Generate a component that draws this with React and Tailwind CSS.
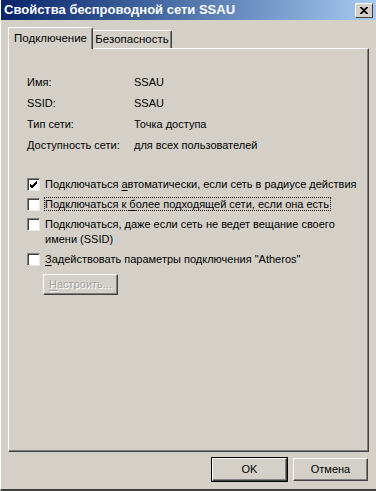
import React from 'react';

const font = { fontFamily: '"Liberation Sans", Arial, sans-serif' };

function U({ children }) {
  return <span className="underline underline-offset-2">{children}</span>;
}

function Check({ checked, children }) {
  return (
    <div className="flex items-start">
      <div className="mt-[1px] w-[13px] h-[13px] shrink-0 bg-white border border-t-[#808080] border-l-[#808080] border-r-[#e8e8e8] border-b-[#e8e8e8] shadow-[inset_1px_1px_0_#404040] flex items-center justify-center">
        {checked && (
          <svg width="9" height="9" viewBox="0 0 9 9">
            <path d="M1 4 L3 6 L8 1 M1 5 L3 7 L8 2 M1 6 L3 8 L8 3" stroke="#000" strokeWidth="1" fill="none" />
          </svg>
        )}
      </div>
      <div className="ml-[5px] leading-[15px]">{children}</div>
    </div>
  );
}

function Button({ children, className = '', disabled }) {
  return (
    <div
      className={
        'flex items-center justify-center border border-t-white border-l-white border-r-[#404040] border-b-[#404040] shadow-[inset_-1px_-1px_0_#808080] ' +
        (disabled ? 'text-[#a0a0a0] [text-shadow:1px_1px_0_#fff] ' : 'text-black ') +
        className
      }
    >
      {children}
    </div>
  );
}

export default function App() {
  return (
    <div className="w-[376px] h-[491px] bg-[#d4d0c8] text-[11px] text-black flex flex-col border-l border-l-white border-b-2 border-b-[#404040] overflow-hidden" style={font}>
      <div className="h-[20px] shrink-0 bg-gradient-to-r from-[#0a246a] to-[#a6caf0] flex items-center justify-between pl-[3px] pr-[3px]">
        <span className="text-white font-bold text-[13px]">Свойства беспроводной сети SSAU</span>
        <div className="w-[18px] h-[15px] bg-[#d4d0c8] border border-t-white border-l-white border-r-[#404040] border-b-[#404040] flex items-center justify-center">
          <svg width="8" height="7" viewBox="0 0 8 7">
            <path d="M0 0 L7 7 M1 0 L8 7 M7 0 L0 7 M8 0 L1 7" stroke="#000" strokeWidth="1.2" fill="none" />
          </svg>
        </div>
      </div>

      <div className="flex-1 flex flex-col px-[7px] pt-[7px]">
        <div className="flex items-end h-[21px] relative z-10">
          <div className="h-[22px] w-[85px] flex items-center justify-center text-[11.5px] bg-[#d4d0c8] border border-b-0 border-t-white border-l-white border-r-[#404040] rounded-t-[2px] shadow-[inset_-1px_0_0_#808080] mb-[-1px]">
            Подключение
          </div>
          <div className="h-[18px] w-[79px] flex items-center justify-center text-[11.5px] border border-b-0 border-t-white border-l-0 border-r-[#404040] rounded-tr-[2px] shadow-[inset_-1px_0_0_#808080]">
            Безопасность
          </div>
        </div>
        <div className="h-[404px] w-[361px] border border-t-white border-l-white border-r-[#404040] border-b-[#404040] shadow-[inset_-1px_-1px_0_#808080] pl-[18px] pt-[26px]">
          <div className="grid grid-cols-[107px_1fr] gap-y-[6px] leading-[15px]">
            <div>Имя:</div>
            <div>SSAU</div>
            <div>SSID:</div>
            <div>SSAU</div>
            <div>Тип сети:</div>
            <div>Точка доступа</div>
            <div>Доступность сети:</div>
            <div>для всех пользователей</div>
          </div>

          <div className="mt-[24px] flex flex-col gap-[5px] w-[335px]">
            <Check checked>
              Подключаться <U>а</U>втоматически, если сеть в радиусе действия
            </Check>
            <Check>
              <span className="border border-dotted border-black -ml-[1px] pr-[1px]">
                Подключаться к <U>б</U>олее подходящей сети, если она есть
              </span>
            </Check>
            <div className="w-[312px]">
              <Check>
                Подключаться, даже если сеть не ведет вещание своего имени (SSID)
              </Check>
            </div>
            <Check>
              <U>З</U>адействовать параметры подключения "Atheros"
            </Check>
            <Button disabled className="ml-[16px] mt-[2px] w-[75px] h-[21px]">
              <span><U>Н</U>астроить...</span>
            </Button>
          </div>
        </div>

        <div className="flex justify-end gap-[6px] mt-[6px] pr-[1px]">
          <Button className="w-[75px] h-[23px] outline outline-1 outline-black">OK</Button>
          <Button className="w-[75px] h-[23px]">Отмена</Button>
        </div>
      </div>
    </div>
  );
}
